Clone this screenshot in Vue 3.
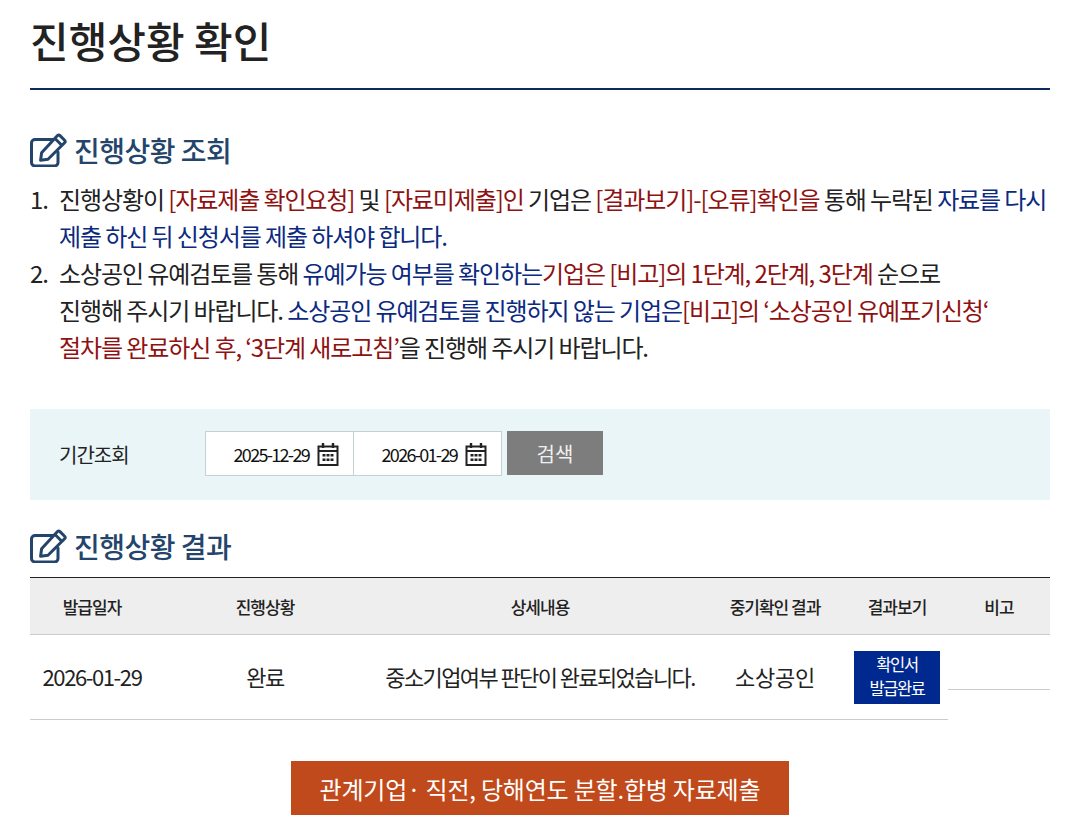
<script setup>
const cols = ['발급일자', '진행상황', '상세내용', '중기확인 결과', '결과보기', '비고']
</script>

<template>
  <div class="page">
    <h1 class="title">진행상황 확인</h1>

    <h2 class="sub first">
      <svg class="edit" viewBox="0 0 38 34" aria-hidden="true">
        <path d="M23 6.5H5A3.5 3.5 0 0 0 1.5 10v19.5A3.5 3.5 0 0 0 5 33H24.5A3.5 3.5 0 0 0 28 29.5V19" fill="none" stroke="#24456b" stroke-width="3" stroke-linecap="round"/>
        <path d="M30 2.6l4.6 4.6a1.8 1.8 0 0 1 0 2.5L18 26.2l-7.4 1 1-7.4L27.5 2.6a1.8 1.8 0 0 1 2.5 0zM25 5.5l7 7" fill="none" stroke="#24456b" stroke-width="3" stroke-linejoin="round"/>
      </svg>
      <span>진행상황 조회</span>
    </h2>

    <ol class="notes">
      <li>
        <span class="no">1.</span>
        <div>진행상황이 <span class="red">[자료제출 확인요청]</span> 및 <span class="red">[자료미제출]인</span> 기업은 <span class="red">[결과보기]-[오류]확인을</span> 통해 누락된 <span class="blue">자료를 다시<br>제출 하신 뒤 신청서를 제출 하셔야 합니다.</span></div>
      </li>
      <li>
        <span class="no">2.</span>
        <div>소상공인 유예검토를 통해 <span class="blue">유예가능 여부를 확인하는</span><span class="red">기업은 [비고]의 1단계, 2단계, 3단계</span> 순으로<br>진행해 주시기 바랍니다. <span class="blue">소상공인 유예검토를 진행하지 않는 기업은</span><span class="red">[비고]의 ‘소상공인 유예포기신청‘<br>절차를 완료하신 후, ‘3단계 새로고침’</span>을 진행해 주시기 바랍니다.</div>
      </li>
    </ol>

    <div class="search">
      <span class="label">기간조회</span>
      <div class="dates">
        <div class="date" v-for="d in ['2025-12-29', '2026-01-29']" :key="d">
          <span>{{ d }}</span>
          <svg class="cal" viewBox="0 0 22 24" aria-hidden="true">
            <path d="M1.5 4.5h19V23h-19zM1.5 9h19" fill="none" stroke="#222" stroke-width="2"/>
            <path d="M6 1v5M16 1v5" stroke="#222" stroke-width="2.4"/>
            <path d="M5.5 12h3v2.5h-3zM9.5 12h3v2.5h-3zM13.5 12h3v2.5h-3zM5.5 16.5h3V19h-3zM9.5 16.5h3V19h-3zM13.5 16.5h3V19h-3z" fill="#222"/>
          </svg>
        </div>
      </div>
      <button class="go" type="button">검색</button>
    </div>

    <h2 class="sub second">
      <svg class="edit" viewBox="0 0 38 34" aria-hidden="true">
        <path d="M23 6.5H5A3.5 3.5 0 0 0 1.5 10v19.5A3.5 3.5 0 0 0 5 33H24.5A3.5 3.5 0 0 0 28 29.5V19" fill="none" stroke="#24456b" stroke-width="3" stroke-linecap="round"/>
        <path d="M30 2.6l4.6 4.6a1.8 1.8 0 0 1 0 2.5L18 26.2l-7.4 1 1-7.4L27.5 2.6a1.8 1.8 0 0 1 2.5 0zM25 5.5l7 7" fill="none" stroke="#24456b" stroke-width="3" stroke-linejoin="round"/>
      </svg>
      <span>진행상황 결과</span>
    </h2>

    <div class="table">
      <div class="head">
        <div v-for="c in cols" :key="c">{{ c }}</div>
      </div>
      <div class="row">
        <div class="cell">2026-01-29</div>
        <div class="cell">완료</div>
        <div class="cell detail">중소기업여부 판단이 완료되었습니다.</div>
        <div class="cell wide">소상공인</div>
        <div class="cell"><div class="badge">확인서<br>발급완료</div></div>
        <div class="extra"></div>
      </div>
    </div>

    <div class="cta-wrap">
      <button class="cta" type="button">관계기업· 직전, 당해연도 분할.합병 자료제출</button>
    </div>
  </div>
</template>

<style>
html, body { margin: 0; background: #fff; }
</style>

<style scoped>
.page {
  width: 1080px;
  height: 834px;
  overflow: hidden;
  box-sizing: border-box;
  padding: 0 30px;
  font-family: "Noto Sans CJK KR", "Noto Sans", sans-serif;
  color: #222;
}
.title {
  margin: 0;
  height: 88px;
  border-bottom: 2px solid #0f2a5c;
  font-size: 42px;
  font-weight: 500;
  line-height: 80px;
  color: #222;
}
.sub {
  display: flex;
  align-items: center;
  gap: 6px;
  margin: 0;
  font-size: 28px;
  font-weight: 500;
  line-height: 40px;
  letter-spacing: -0.5px;
  color: #24456b;
}
.sub.first { margin-top: 40px; }
.sub.second { margin-top: 26px; }
.edit { width: 38px; height: 34px; flex: none; }
.notes {
  list-style: none;
  margin: 10px 0 0;
  padding: 0;
  font-size: 24px;
  line-height: 37px;
  letter-spacing: -1.1px;
  color: #222;
}
.notes li { display: flex; }
.no { width: 29px; flex: none; }
.notes li div { white-space: nowrap; }
.red { color: #8f1111; }
.blue { color: #0b2a80; }
.search {
  display: flex;
  align-items: center;
  height: 91px;
  margin-top: 44px;
  background: #e9f5f7;
}
.label {
  width: 175px;
  padding-left: 29px;
  box-sizing: border-box;
  font-size: 20px;
  letter-spacing: -1px;
}
.dates { display: flex; margin-bottom: 2px; }
.date {
  display: flex;
  align-items: center;
  justify-content: flex-end;
  gap: 8px;
  box-sizing: border-box;
  width: 149px;
  height: 45px;
  padding-right: 14px;
  background: #fff;
  border: 1px solid #c4d0d6;
  font-size: 18px;
  letter-spacing: -1.7px;
  color: #111;
}
.date + .date { margin-left: -1px; }
.cal { width: 22px; height: 24px; flex: none; }
.go {
  width: 96px;
  height: 44px;
  margin: 0 0 3px 5px;
  padding: 0;
  border: 0;
  background: #7d7d7d;
  color: #f0f0f0;
  font: inherit;
  font-size: 20px;
}
.table { margin-top: 11px; border-top: 1px solid #222; }
.head, .row {
  display: grid;
  grid-template-columns: 124px 222px 328px 142px 102px 102px;
  text-align: center;
}
.head {
  height: 56px;
  align-items: center;
  background: #eee;
  border-bottom: 1px solid #ccc;
  font-size: 17px;
  font-weight: 500;
  letter-spacing: -1px;
  color: #222;
}
.row { height: 85px; }
.cell {
  display: flex;
  align-items: center;
  justify-content: center;
  box-sizing: border-box;
  padding-bottom: 2px;
  border-bottom: 1px solid #ccc;
  font-size: 22px;
  letter-spacing: -1.4px;
}
.cell.detail { letter-spacing: -1.6px; }
.cell.wide { letter-spacing: -0.3px; }
.badge {
  width: 86px;
  height: 53px;
  margin-top: 3px;
  background: #00298f;
  color: #fff;
  font-size: 16.5px;
  line-height: 24px;
  padding-top: 1px;
  box-sizing: border-box;
}
.extra { height: 54px; border-bottom: 1px solid #ccc; }
.cta-wrap { display: flex; justify-content: center; margin-top: 41px; }
.cta {
  width: 498px;
  height: 54px;
  padding: 0;
  border: 0;
  background: #c04a1c;
  color: #fff;
  font: inherit;
  font-size: 24px;
  letter-spacing: -0.2px;
}
</style>
